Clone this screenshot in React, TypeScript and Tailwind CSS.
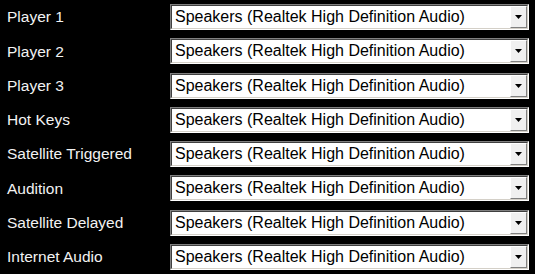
const rows = [
  "Player 1",
  "Player 2",
  "Player 3",
  "Hot Keys",
  "Satellite Triggered",
  "Audition",
  "Satellite Delayed",
  "Internet Audio",
];

function DeviceSelect({ value }: { value: string }) {
  return (
    <div className="w-[359px] h-[26px] border border-t-[#808080] border-l-[#808080] border-b-white border-r-white">
      <div className="h-full flex border border-t-[#404040] border-l-[#404040] border-b-[#d4d0c8] border-r-[#d4d0c8] bg-white">
        <div className="flex-1 flex items-center pl-[3px] text-[16px] leading-none text-black whitespace-nowrap overflow-hidden">
          {value}
        </div>
        <div className="w-[17px] h-full flex items-center justify-center bg-[#f0f0f0] border border-t-white border-l-white border-b-[#808080] border-r-[#808080]">
          <svg width="7" height="4" viewBox="0 0 7 4">
            <path d="M0 0h7L3.5 4z" fill="#000" />
          </svg>
        </div>
      </div>
    </div>
  );
}

export default function App() {
  return (
    <div
      className="w-[535px] h-[274px] bg-black pt-[4px] flex flex-col gap-[8.3px]"
      style={{ fontFamily: '"Liberation Sans", Arial, sans-serif' }}
    >
      {rows.map((label) => (
        <div key={label} className="flex items-center">
          <div className="w-[170px] pl-[7px] text-[15.5px] text-[#f2f2f2] leading-none">{label}</div>
          <DeviceSelect value="Speakers (Realtek High Definition Audio)" />
        </div>
      ))}
    </div>
  );
}
